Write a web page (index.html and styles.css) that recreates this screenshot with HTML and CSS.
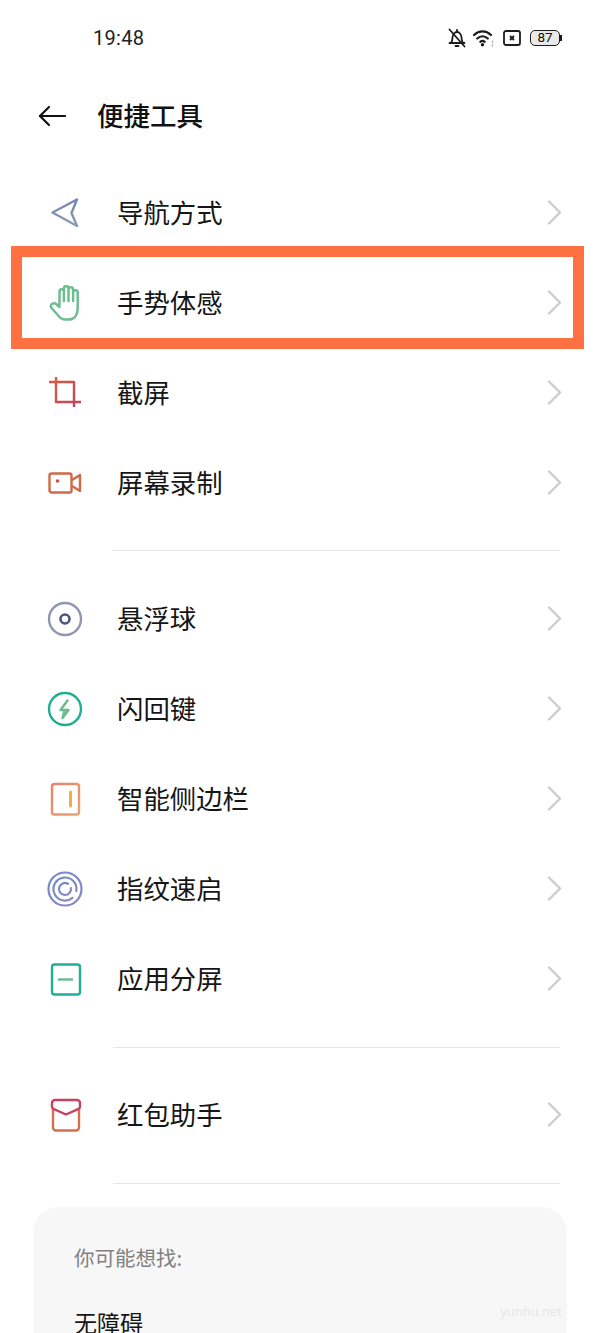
FILE: index.html
```html
<!DOCTYPE html>
<html lang="zh">
<head>
<meta charset="utf-8">
<title>便捷工具</title>
<link rel="stylesheet" href="styles.css">
</head>
<body>
<svg class="defs" width="0" height="0" aria-hidden="true">
  <defs>
    <linearGradient id="g-nav" x1="0" y1="0" x2="0" y2="1"><stop offset="0" stop-color="#7385b8"/><stop offset="1" stop-color="#8f9bb4"/></linearGradient>
    <linearGradient id="g-crop" gradientUnits="userSpaceOnUse" x1="2" y1="2" x2="34" y2="32"><stop offset="0" stop-color="#dc5f3c"/><stop offset="1" stop-color="#c23f62"/></linearGradient>
    <linearGradient id="g-side" x1="0" y1="0" x2="1" y2="1"><stop offset="0" stop-color="#e58468"/><stop offset="1" stop-color="#e8a274"/></linearGradient>
    <linearGradient id="g-print" x1="0" y1="0" x2="1" y2="1"><stop offset="0" stop-color="#6f8ccb"/><stop offset="1" stop-color="#8b85c4"/></linearGradient>
  </defs>
</svg>
<main class="page">
  <div class="status">
    <span class="time">19:48</span>
    <div class="status-icons">
      <svg class="st-bell" width="18" height="20" viewBox="0 0 18 20" fill="none" stroke="#1c1c1c" stroke-width="1.800" stroke-linecap="round" stroke-linejoin="round"><path d="M1.500 15h15"/><path d="M3 15c1-1.500 1.500-3 1.500-5.500 0-2.800 2-5.500 4.500-5.500s4.500 2.700 4.500 5.500c0 2.500.5 4 1.500 5.500"/><path d="M9 2v2"/><path d="M7.500 18h3"/><path d="M1.500 1.500l15 17"/></svg>
      <svg class="st-wifi" width="21" height="18" viewBox="0 0 21 18" fill="none" stroke="#1c1c1c" stroke-width="2.200" stroke-linecap="round"><path d="M1 6c5-4.800 12-4.800 17 0"/><path d="M4.200 9.500c3.200-3 7.400-3 10.600 0"/><path d="M7.300 12.800c1.400-1.200 3-1.200 4.400 0"/><circle cx="9.500" cy="15.800" r="1.700" fill="#1c1c1c" stroke="none"/><path d="M19.500 12v1.500M19.500 15.500v1.500" stroke="#bdbdbd" stroke-width="1.500"/></svg>
      <svg class="st-sim" width="18" height="16" viewBox="0 0 18 16" fill="none" stroke="#1c1c1c"><rect x="1" y="1" width="16" height="14" rx="2" stroke-width="1.800"/><path d="M7 6l4 4M11 6l-4 4" stroke-width="1.900"/></svg>
      <div class="battery"><span class="battery-level">87</span><span class="battery-tip"></span></div>
    </div>
  </div>

  <header class="header">
    <svg width="28" height="24" viewBox="0 0 28 24" fill="none" stroke="#111" stroke-width="2.200" stroke-linecap="round" stroke-linejoin="round"><path d="M2 12h25"/><path d="M11 3l-9 9 9 9"/></svg>
    <h1 class="title">便捷工具</h1>
  </header>

  <section class="group group-first">
    <a class="row">
      <svg class="icon" viewBox="0 0 36 36" fill="none" stroke-width="2.400" stroke-linejoin="round"><path d="M5.500 17.500L30 4.500 24.500 18 30 31z" stroke="url(#g-nav)"/></svg>
      <span class="label">导航方式</span>
      <svg class="chev" viewBox="0 0 16 26" fill="none" stroke-width="2.400" stroke-linecap="round" stroke-linejoin="round"><path d="M3 1.500l11 11-11 11"/></svg>
    </a>
    <a class="row row-marked">
      <svg class="icon" viewBox="0 0 36 36" fill="none" stroke="#6dbd93" stroke-width="2.500" stroke-linecap="round" stroke-linejoin="round"><path d="M12.500 20V6.500a2.200 2.200 0 0 1 4.400 0V16M16.900 16V3.500a2.300 2.300 0 0 1 4.600 0V16M21.500 16V4.500a2.300 2.300 0 0 1 4.600 0V16M26.100 16V7.500a2.300 2.300 0 0 1 4.600 0V23c0 7-3.500 11.500-9 11.500h-3.500c-4 0-5.500-2-7.500-4.500l-6.500-7.500c-1.500-2.500 2-5.500 5-3.500l3.300 3"/></svg>
      <span class="label">手势体感</span>
      <svg class="chev" viewBox="0 0 16 26" fill="none" stroke-width="2.400" stroke-linecap="round" stroke-linejoin="round"><path d="M3 1.500l11 11-11 11"/></svg>
      <span class="mark"></span>
    </a>
    <a class="row">
      <svg class="icon" viewBox="0 0 36 36" fill="none" stroke="url(#g-crop)" stroke-width="2.400" stroke-linecap="butt" stroke-linejoin="round"><path d="M9 2v25h25"/><path d="M2 7h25v25"/></svg>
      <span class="label">截屏</span>
      <svg class="chev" viewBox="0 0 16 26" fill="none" stroke-width="2.400" stroke-linecap="round" stroke-linejoin="round"><path d="M3 1.500l11 11-11 11"/></svg>
    </a>
    <a class="row">
      <svg class="icon" viewBox="0 0 36 36" fill="none" stroke="#cf6a45" stroke-width="2.400" stroke-linejoin="round"><rect x="2.500" y="8.500" width="22" height="19" rx="2"/><path d="M25 15l8-5v16l-8-5"/><circle cx="10.500" cy="16" r="1.800" fill="#c9503f" stroke="none"/></svg>
      <span class="label">屏幕录制</span>
      <svg class="chev" viewBox="0 0 16 26" fill="none" stroke-width="2.400" stroke-linecap="round" stroke-linejoin="round"><path d="M3 1.500l11 11-11 11"/></svg>
    </a>
  </section>
  <hr class="divider">

  <section class="group">
    <a class="row">
      <svg class="icon" viewBox="0 0 36 36" fill="none" stroke-width="2.400"><circle cx="18" cy="18" r="16" stroke="#8f96b2"/><circle cx="18" cy="18" r="4.500" stroke="#46557f" stroke-width="2.600"/></svg>
      <span class="label">悬浮球</span>
      <svg class="chev" viewBox="0 0 16 26" fill="none" stroke-width="2.400" stroke-linecap="round" stroke-linejoin="round"><path d="M3 1.500l11 11-11 11"/></svg>
    </a>
    <a class="row">
      <svg class="icon" viewBox="0 0 36 36" fill="none" stroke-width="2.400" stroke-linejoin="round"><circle cx="18" cy="18" r="16" stroke="#1fae92"/><path d="M20.500 9.500l-7 9.500h8l-6 8 1.700-6.500" stroke="#6cb98c" stroke-linecap="round"/></svg>
      <span class="label">闪回键</span>
      <svg class="chev" viewBox="0 0 16 26" fill="none" stroke-width="2.400" stroke-linecap="round" stroke-linejoin="round"><path d="M3 1.500l11 11-11 11"/></svg>
    </a>
    <a class="row">
      <svg class="icon" viewBox="0 0 36 36" fill="none" stroke-width="2.400"><rect x="5" y="3" width="27" height="30.500" rx="2.500" stroke="url(#g-side)"/><path d="M23.500 11v14" stroke="#eeb040" stroke-width="3" stroke-linecap="round"/></svg>
      <span class="label">智能侧边栏</span>
      <svg class="chev" viewBox="0 0 16 26" fill="none" stroke-width="2.400" stroke-linecap="round" stroke-linejoin="round"><path d="M3 1.500l11 11-11 11"/></svg>
    </a>
    <a class="row">
      <svg class="icon" viewBox="0 0 36 36" fill="none" stroke="url(#g-print)" stroke-width="2.200" stroke-linecap="round"><circle cx="18" cy="18" r="16.500"/><path d="M29.300 20A11.500 11.500 0 1 0 25.400 26.800"/><path d="M23.900 17A6 6 0 1 1 21 12.800"/></svg>
      <span class="label">指纹速启</span>
      <svg class="chev" viewBox="0 0 16 26" fill="none" stroke-width="2.400" stroke-linecap="round" stroke-linejoin="round"><path d="M3 1.500l11 11-11 11"/></svg>
    </a>
    <a class="row">
      <svg class="icon" viewBox="0 0 36 36" fill="none" stroke-width="2.400"><rect x="5" y="3.500" width="28" height="30" rx="2.500" stroke="#1fae98"/><path d="M11 18.500h15" stroke="#6cb98c"/></svg>
      <span class="label">应用分屏</span>
      <svg class="chev" viewBox="0 0 16 26" fill="none" stroke-width="2.400" stroke-linecap="round" stroke-linejoin="round"><path d="M3 1.500l11 11-11 11"/></svg>
    </a>
  </section>
  <hr class="divider divider-mid">

  <section class="group">
    <a class="row">
      <svg class="icon" viewBox="0 0 36 36" fill="none" stroke-width="2.400" stroke-linejoin="round"><path d="M6 11v19.500a3 3 0 0 0 3 3h20a3 3 0 0 0 3-3V11" stroke="#d3704f"/><path d="M8 3h22a3 3 0 0 1 3 3v3.500c0 1-.5 1.800-1.400 2.300L19 17.500 6.400 11.800C5.500 11.300 5 10.500 5 9.500V6a3 3 0 0 1 3-3z" stroke="#c94060"/></svg>
      <span class="label">红包助手</span>
      <svg class="chev" viewBox="0 0 16 26" fill="none" stroke-width="2.400" stroke-linecap="round" stroke-linejoin="round"><path d="M3 1.500l11 11-11 11"/></svg>
    </a>
  </section>
  <hr class="divider divider-last">

  <aside class="card">
    <p class="card-title">你可能想找:</p>
    <p class="card-link">无障碍</p>
    <span class="watermark">yunhu.net</span>
  </aside>
</main>
</body>
</html>
```
FILE: styles.css
```css
* { box-sizing: border-box; }
html, body { margin: 0; padding: 0; background: #fff; }
.defs { position: absolute; }
.page {
  width: 600px;
  height: 1333px;
  overflow: hidden;
  color: #111;
  font-family: "Noto Sans CJK SC", "Noto Sans", sans-serif;
}
.status {
  height: 76px;
  display: flex;
  align-items: center;
  justify-content: space-between;
  padding: 0 38px 0 93px;
}
.time { font-family: Roboto, sans-serif; font-size: 20px; color: #222; letter-spacing: .3px; }
.status-icons { display: flex; align-items: center; }
.st-bell { margin-right: 7px; }
.st-wifi { margin-right: 9px; }
.st-sim { margin-right: 9px; }
.battery { display: flex; align-items: center; }
.battery-level {
  width: 30px;
  height: 16px;
  border: 1.600px solid #1c1c1c;
  border-radius: 5px;
  background: #e9e9e9;
  font-family: Roboto, sans-serif;
  font-size: 13.500px;
  line-height: 13px;
  text-align: center;
}
.battery-tip { width: 2px; height: 6px; background: #1c1c1c; }
.header {
  height: 80px;
  display: flex;
  align-items: center;
  gap: 31px;
  padding-left: 38px;
}
.title { margin: 0; padding-bottom: 2px; font-size: 26.500px; font-weight: 500; line-height: 1; }
.group-first { margin-top: 12px; }
.row {
  position: relative;
  height: 90px;
  display: flex;
  align-items: center;
  padding: 0 38px 0 47px;
}
.icon { width: 36px; height: 36px; flex: none; }
.label { margin-left: 34px; flex: 1; padding-bottom: 2px; font-size: 26.400px; line-height: 1; color: #161616; }
.chev { width: 16px; height: 26px; flex: none; stroke: #cdcdcd; }
.mark {
  position: absolute;
  left: 11px;
  top: -12px;
  width: 573px;
  height: 103px;
  border: 11px solid #ff7043;
}
.divider {
  margin: 22px 40px 23px 113px;
  height: 1px;
  border: 0;
  background: #e6e6e6;
}
.divider-mid { margin-top: 23px; margin-bottom: 22px; }
.divider-last { margin-top: 23px; margin-bottom: 23px; }
.card {
  position: relative;
  margin: 0 33px;
  height: 200px;
  padding: 34px 41px 0;
  border-radius: 26px;
  background: #f7f7f7;
}
.card-title { margin: 0; font-size: 20.500px; line-height: 32px; color: #808080; }
.card-link { margin: 33px 0 0; font-size: 23px; line-height: 32px; color: #161616; }
.watermark {
  position: absolute;
  right: 5px;
  top: 95px;
  font-family: "Open Sans", sans-serif;
  font-size: 13px;
  color: #e6e6e6;
}
```
